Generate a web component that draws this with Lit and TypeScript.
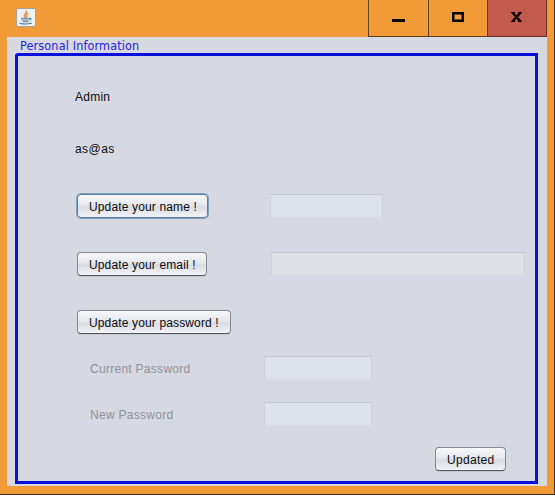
import { LitElement, html, css } from "lit";
import { customElement } from "lit/decorators.js";

@customElement("app-root")
export class AppRoot extends LitElement {
  static styles = css`
    :host {
      display: block;
      width: 555px;
      height: 497px;
      background: #fff;
      font: 12px/16px "Liberation Sans", Arial, sans-serif;
      color: #0c0c10;
    }
    * { box-sizing: border-box; }
    .window {
      width: 555px;
      height: 495px;
      background: #f19b38;
      border-right: 1px solid #4a3420;
      border-bottom: 1px solid #3a2a1c;
      padding: 0 7px 8px 7px;
      display: flex;
      flex-direction: column;
    }
    .titlebar { height: 37px; flex: none; display: flex; align-items: flex-start; }
    .logo { margin: 8px 0 0 9px; width: 20px; height: 19px; display: block; }
    .controls { margin-left: auto; display: flex; height: 37px; }
    .ctl {
      width: 60px;
      height: 37px;
      border-left: 1px solid #633c1c;
      border-bottom: 1px solid #633c1c;
    }
    .ctl svg { display: block; width: 59px; height: 36px; }
    .ctl.mid { width: 59px; }
    .ctl.close { background: #c35a4e; border-color: #6b2f25; border-right: 1px solid #6b2f25; }
    .panel { flex: 1; background: #d6d9e1; padding: 1px 9px 2px 8px; display: flex; flex-direction: column; }
    .legend {
      height: 15px;
      padding-left: 5px;
      font: 12.5px/15px "DejaVu Sans Condensed", "DejaVu Sans", sans-serif;
      letter-spacing: 0.15px;
      color: #2424dc;
      white-space: nowrap;
    }
    .frame {
      flex: 1;
      border: 3px solid #0a10dc;
      border-radius: 3px 0 0 0;
      display: flex;
      flex-direction: column;
      align-items: flex-start;
    }
    .text { margin-left: 57px; white-space: nowrap; letter-spacing: 0.25px; }
    .name { margin-top: 33px; }
    .mail { margin-top: 36px; letter-spacing: 0.45px; }
    .row { display: flex; height: 24px; margin-left: 59px; align-items: center; }
    .row.sub { margin-left: 72px; }
    .r1 { margin-top: 37px; }
    .r2, .r3 { margin-top: 34px; }
    .r4, .r5 { margin-top: 22px; }
    .r6 { margin-top: 21px; align-self: flex-end; margin-right: 29px; }
    .btn {
      height: 24px;
      flex: none;
      border: 1px solid #85888f;
      border-bottom-color: #55585e;
      border-radius: 4px;
      background: linear-gradient(#f8f8fa, #e6e8ec 45%, #d9dce3 55%, #f1f3f7);
      box-shadow: 0 1px 0 #c3c6ce;
      font: inherit;
      line-height: 22px;
      color: inherit;
      padding: 1px 0 0 11px;
      letter-spacing: 0.14px;
      text-align: left;
      white-space: nowrap;
    }
    .btn.focus { border-color: #5d7c9c; box-shadow: 0 0 0 1px #7da2c4; }
    .w1 { width: 131px; }
    .w2 { width: 130px; }
    .w3 { width: 154px; }
    .w4 { width: 71px; letter-spacing: 0.3px; }
    .hint { width: 174px; padding-top: 2px; color: #8f929a; white-space: nowrap; letter-spacing: 0.28px; }
    .field {
      height: 24px;
      border: 1px solid #cdd0d8;
      border-top-color: #c3c6cf;
      border-bottom-color: #d9dce3;
      background: #dde1e9;
    }
    .f1 { width: 113px; margin-left: 62px; }
    .f2 { width: 254px; margin-left: 64px; background: #dde0e5; }
    .f3 { width: 108px; }
  `;

  render() {
    return html`
      <div class="window">
        <div class="titlebar">
          <svg class="logo" viewBox="0 0 20 19">
            <rect x=".5" y=".5" width="19" height="18" rx="1.5" fill="#edf0f2" stroke="#aaa293" />
            <path d="M10.5 2.5C11.5 5 7.5 6 8.5 8.5L10 10M12.5 5.5C9.5 6.5 10 7.5 11 9" fill="none" stroke="#e39448" stroke-width="1.5" />
            <path d="M5 10.2H13.5M5.5 12H12.5M7 13.7H12.5M13.5 10.5Q16.5 10 13.5 12.5M3.5 15.2Q10 17 16 15" fill="none" stroke="#587893" stroke-width="1.1" />
          </svg>
          <div class="controls">
            <div class="ctl"><svg viewBox="0 0 59 36"><rect x="23" y="19" width="13" height="3" fill="#080400" /></svg></div>
            <div class="ctl mid"><svg viewBox="0 0 59 36"><rect x="24.25" y="13.25" width="9.5" height="7.5" fill="none" stroke="#080400" stroke-width="2.5" /></svg></div>
            <div class="ctl close"><svg viewBox="0 0 59 36"><path d="M24.5 12.5L32.5 21.5M32.5 12.5L24.5 21.5" stroke="#100404" stroke-width="2.5" /><path d="M23 12.5H27M30 12.5H34M23 21.5H27M30 21.5H34" stroke="#100404" /></svg></div>
          </div>
        </div>
        <div class="panel">
          <div class="legend">Personal Information</div>
          <div class="frame">
            <div class="text name">Admin</div>
            <div class="text mail">as@as</div>
            <div class="row r1"><button class="btn focus w1">Update your name !</button><div class="field f1"></div></div>
            <div class="row r2"><button class="btn w2">Update your email !</button><div class="field f2"></div></div>
            <div class="row r3"><button class="btn w3">Update your password !</button></div>
            <div class="row sub r4"><div class="hint">Current Password</div><div class="field f3"></div></div>
            <div class="row sub r5"><div class="hint">New Password</div><div class="field f3"></div></div>
            <div class="row r6"><button class="btn w4">Updated</button></div>
          </div>
        </div>
      </div>
    `;
  }
}
